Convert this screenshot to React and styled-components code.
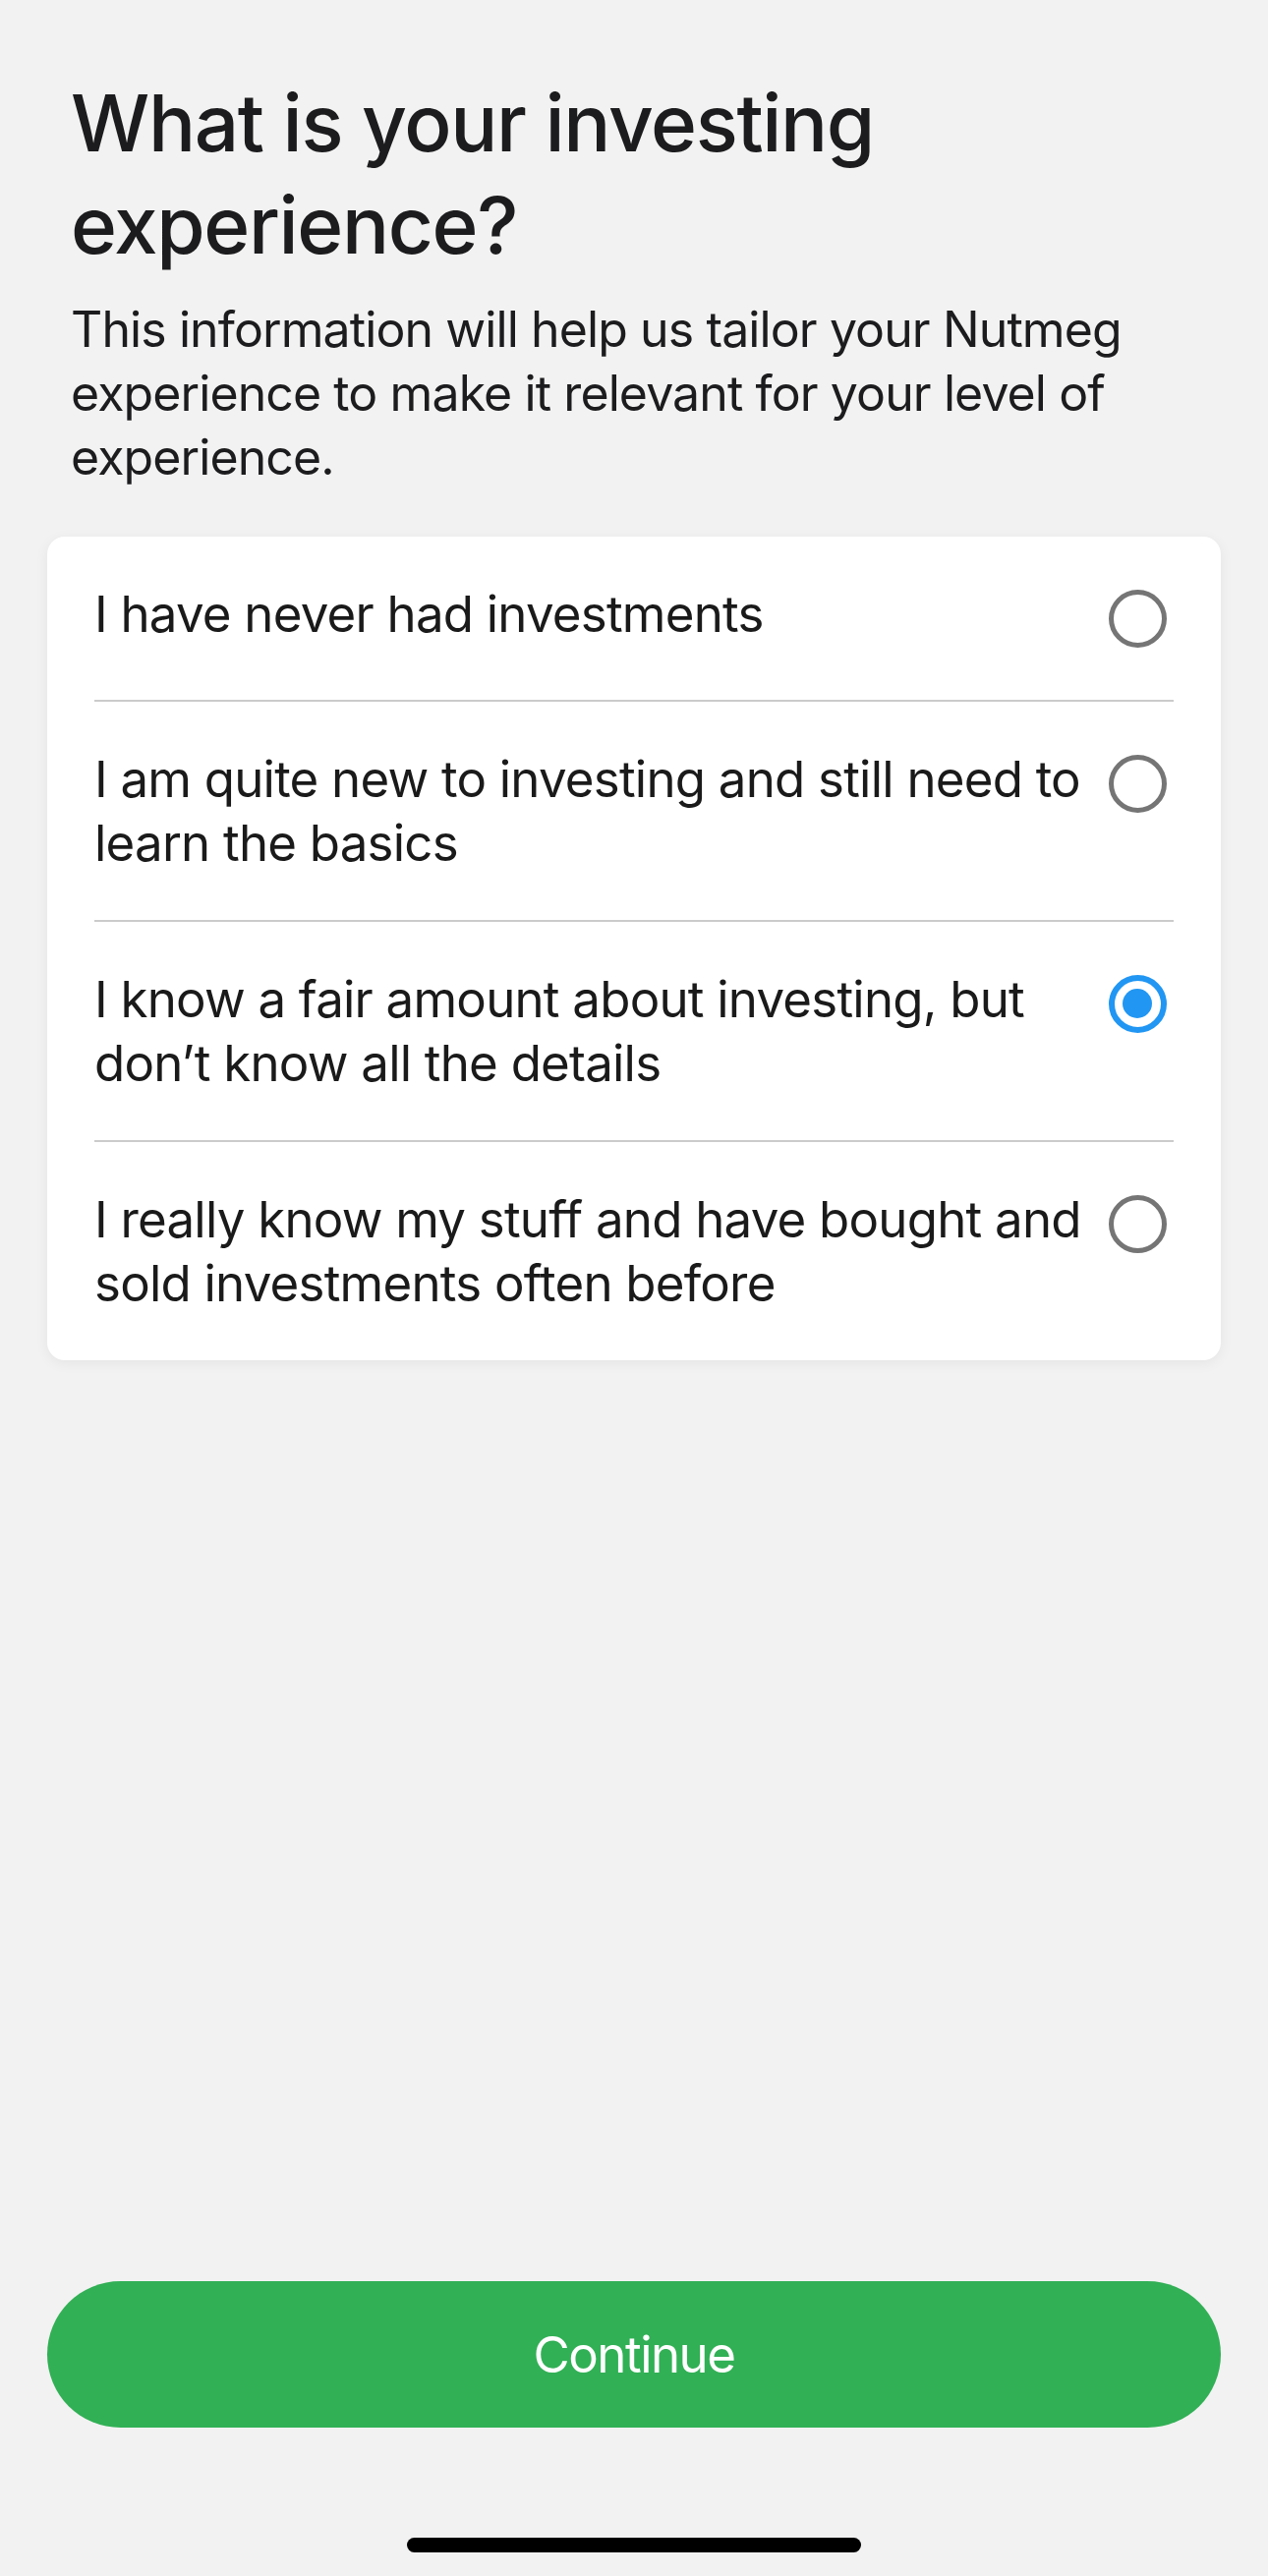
import React, { useState } from "react";
import styled, { createGlobalStyle, css } from "styled-components";

const GlobalStyle = createGlobalStyle`
  html, body {
    margin: 0;
    padding: 0;
    background: #f2f2f2;
  }
  body {
    font-family: Inter, "Noto Sans", "Liberation Sans", sans-serif;
    color: #1c1c1e;
    -webkit-font-smoothing: antialiased;
  }
  * { box-sizing: border-box; }
`;

const options = [
  "I have never had investments",
  "I am quite new to investing and still need to learn the basics",
  "I know a fair amount about investing, but don\u2019t know all the details",
  "I really know my stuff and have bought and sold investments often before",
];

const Page = styled.main`
  min-height: 100vh;
  display: flex;
  flex-direction: column;
  background: #f2f2f2;
`;

const Header = styled.header`
  padding: 73px 72px 0;
`;

const Title = styled.h1`
  margin: 0;
  font-size: 80px;
  line-height: 104px;
  font-weight: 500;
  letter-spacing: -1.35px;
  color: #1c1c1e;
`;

const Subtitle = styled.p`
  margin: 22px 0 0;
  font-size: 50px;
  line-height: 65px;
  font-weight: 400;
  letter-spacing: -0.9px;
  color: #1c1c1e;
`;

const OptionCard = styled.section`
  margin: 48px 48px 0;
  padding: 0 48px;
  background: #fff;
  border-radius: 18px;
  box-shadow: 0 3px 14px rgba(0, 0, 0, 0.06);
`;

const OptionRow = styled.div`
  display: flex;
  align-items: flex-start;
  gap: 12px;
  padding: 46px 0;
  cursor: pointer;
  border-bottom: 2px solid #cbcbcb;

  &:last-child {
    border-bottom: none;
  }
`;

const OptionText = styled.span`
  flex: 1;
  font-size: 51px;
  line-height: 65px;
  letter-spacing: -0.78px;
  color: #1a1a1a;
`;

const RadioBox = styled.span`
  flex: 0 0 74px;
  height: 74px;
  display: flex;
  align-items: center;
  justify-content: center;
`;

const RadioCircle = styled.span`
  width: 59px;
  height: 59px;
  border-radius: 50%;
  border: 5px solid #757575;
  display: flex;
  align-items: center;
  justify-content: center;

  ${(p) =>
    p.$checked &&
    css`
      border: 6px solid #2196f3;
      &::after {
        content: "";
        width: 30px;
        height: 30px;
        border-radius: 50%;
        background: #2196f3;
      }
    `}
`;

const Spacer = styled.div`
  flex: 1;
`;

const Footer = styled.footer`
  display: flex;
  flex-direction: column;
  align-items: center;
  padding: 0 48px 24px;
`;

const ContinueButton = styled.button`
  width: 100%;
  height: 149px;
  border: none;
  border-radius: 75px;
  background: #31b055;
  color: #fff;
  font-family: inherit;
  font-size: 51px;
  font-weight: 400;
  letter-spacing: -1.5px;
  cursor: pointer;
`;

const HomeIndicator = styled.div`
  margin-top: 112px;
  width: 462px;
  height: 15px;
  border-radius: 8px;
  background: #000;
`;

export default function App() {
  const [selected, setSelected] = useState(2);

  return (
    <>
      <GlobalStyle />
      <Page>
        <Header>
          <Title>What is your investing experience?</Title>
          <Subtitle>
            This information will help us tailor your Nutmeg experience to make
            it relevant for your level of experience.
          </Subtitle>
        </Header>

        <OptionCard>
          {options.map((label, i) => (
            <OptionRow key={i} onClick={() => setSelected(i)}>
              <OptionText>{label}</OptionText>
              <RadioBox>
                <RadioCircle $checked={selected === i} />
              </RadioBox>
            </OptionRow>
          ))}
        </OptionCard>

        <Spacer />

        <Footer>
          <ContinueButton>Continue</ContinueButton>
          <HomeIndicator />
        </Footer>
      </Page>
    </>
  );
}
